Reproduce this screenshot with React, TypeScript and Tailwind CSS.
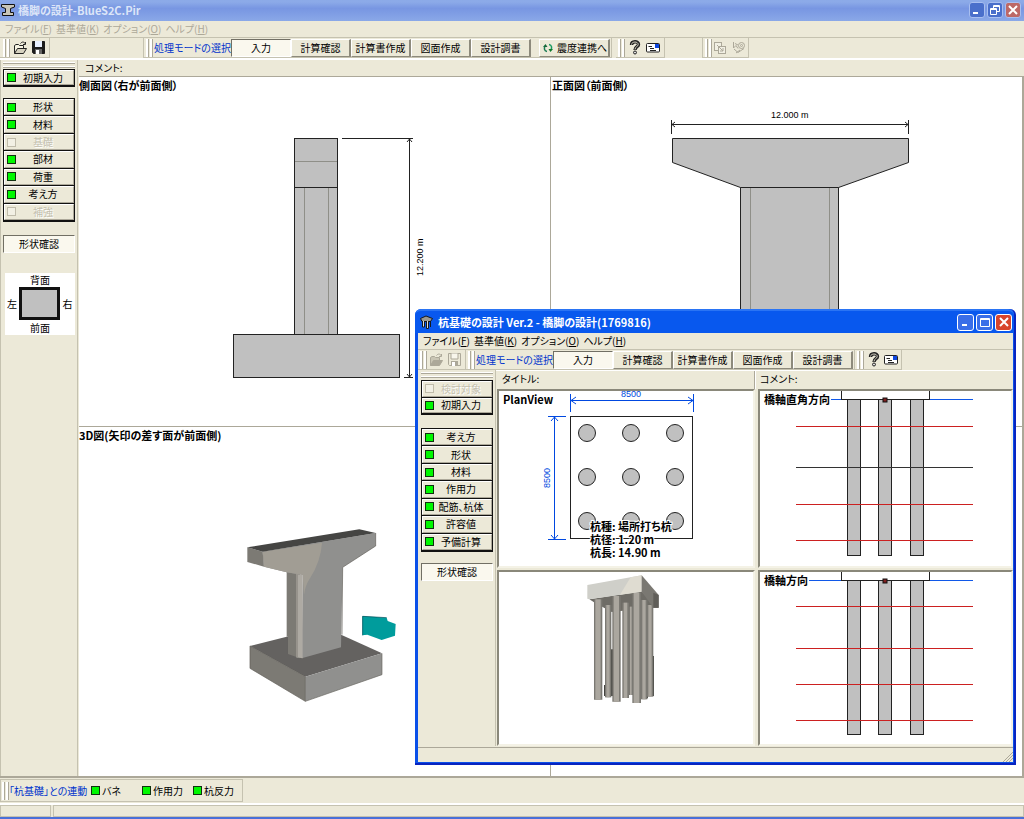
import type { ReactNode } from 'react'
import { clsx } from 'clsx'

interface Step {
  label: string;
  disabled?: boolean;
}

const MENUS = [
  { label: 'ファイル', accel: 'F' },
  { label: '基準値', accel: 'K' },
  { label: 'オプション', accel: 'O' },
  { label: 'ヘルプ', accel: 'H' }
]

const MODES = ['入力', '計算確認', '計算書作成', '図面作成', '設計調書']

const PIER_STEPS: Step[] = [
  { label: '形状' },
  { label: '材料' },
  { label: '基礎', disabled: true },
  { label: '部材' },
  { label: '荷重' },
  { label: '考え方' },
  { label: '補強', disabled: true }
]

const PILE_START: Step[] = [
  { label: '検討対象', disabled: true },
  { label: '初期入力' }
]

const PILE_STEPS: Step[] = [
  { label: '考え方' },
  { label: '形状' },
  { label: '材料' },
  { label: '作用力' },
  { label: '配筋、杭体' },
  { label: '許容値' },
  { label: '予備計算' }
]

function Lamp({ off }: { off?: boolean }) {
  return (
    <span
      className={clsx(
        'block size-[9px] shrink-0 border',
        off ? 'border-[#c0bcab] bg-[#f2f0e4]' : 'border-[#103010] bg-[#00f800]'
      )}
    />
  )
}

function StepButton({ label, disabled }: Step) {
  return (
    <button
      disabled={disabled}
      className="flex min-h-0 flex-1 items-center border-t border-[#111] first:border-t-0"
    >
      <span className="flex h-full w-full items-center border border-t-white border-l-white border-r-[#aca899] border-b-[#aca899] pr-[3px] pl-[2px]">
        <Lamp off={disabled} />
        <span className={clsx('flex-1 text-center leading-3', disabled && 'text-[#c3bfae] [text-shadow:1px_1px_#fff]')}>
          {label}
        </span>
      </span>
    </button>
  )
}

function StepGroup({ steps, className }: { steps: Step[]; className: string }) {
  return (
    <div className={clsx('flex shrink-0 flex-col border border-b-2 border-[#111]', className)}>
      {steps.map((step) => (
        <StepButton key={step.label} {...step} />
      ))}
    </div>
  )
}

function SideGrip() {
  return (
    <div className="mb-[2px] flex h-[6px] shrink-0 flex-col justify-between">
      <span className="h-[2px] border-b border-[#aca899] bg-white" />
      <span className="h-[2px] border-b border-[#aca899] bg-white" />
    </div>
  )
}

function ShapeCheck({ className }: { className: string }) {
  return (
    <button className={clsx('h-[18px] shrink-0 border border-t-[#716f64] border-l-[#716f64] border-r-white border-b-white bg-[#faf8ee] leading-3', className)}>
      形状確認
    </button>
  )
}

function Grip() {
  return (
    <span className="flex h-[18px] shrink-0 gap-px">
      <span className="w-[3px] border-r border-[#aca899] bg-white" />
      <span className="w-[3px] border-r border-[#aca899] bg-white" />
    </span>
  )
}

function ToolGroup({ className, children }: { className?: string; children: ReactNode }) {
  return (
    <div className={clsx('flex h-5 shrink-0 items-center border-r border-b border-[#c5c2b0]', className)}>
      <Grip />
      {children}
    </div>
  )
}

function ModeButtons() {
  return (
    <>
      <span className="ml-px whitespace-nowrap text-[#0033cc]">処理モードの選択</span>
      {MODES.map((mode, i) => (
        <button
          key={mode}
          className={clsx(
            'h-[18px] w-[60px] shrink-0 border whitespace-nowrap leading-3',
            i === 0
              ? 'border-t-[#716f64] border-l-[#716f64] border-r-white border-b-white bg-[#faf8ee]'
              : 'border-r-2 border-t-white border-l-white border-r-[#8d8a7c] border-b-[#8d8a7c]'
          )}
        >
          {mode}
        </button>
      ))}
    </>
  )
}

function OpenIcon({ disabled }: { disabled?: boolean }) {
  const line = disabled ? '#aca899' : '#222'
  return (
    <svg width="15" height="14" viewBox="0 0 15 14" fill="none" stroke={line}>
      <path d="M1.500 12.500V4.500L3 3.500H5.500L6.500 4.500H10.500V7" fill={disabled ? '#c9c5b4' : '#f6f4e4'} />
      <path d="M1.500 12.500L4.500 7.500H13.500L10.500 12.500Z" fill={disabled ? '#aca899' : '#d6d2c0'} />
      <path d="M7.500 2.500C9 .5 11 .5 12.500 3M12.500 1V3.500H10" />
    </svg>
  )
}

function SaveIcon({ disabled }: { disabled?: boolean }) {
  const line = disabled ? '#aca899' : '#1c1c1c'
  return (
    <svg width="13" height="13" viewBox="0 0 13 13">
      <path d="M.5 .5H12.500V12.500H1.500L.5 11.500Z" fill={disabled ? '#ece9d8' : line} stroke={line} />
      <path d="M3 0H10V6H3Z" fill={disabled ? '#f8f6ec' : '#e8f0ff'} stroke={disabled ? line : 'none'} />
      <path d="M3 8H10V13H3Z" fill={disabled ? line : '#666'} />
      <path d="M4 9H7V13H4Z" fill="#fff" />
    </svg>
  )
}

function HelpIcon() {
  return (
    <svg width="12" height="15" viewBox="0 0 12 15" fill="none">
      <path d="M2.500 5C2.500 .8 9.500 .8 9.500 4.500C9.500 7 6 6.500 6 10" stroke="#222" strokeWidth="3.400" />
      <path d="M2.500 4.500C2.800 1.200 9.200 1.200 9.200 4.500C9.200 6.800 6 6.500 6 9.500" stroke="#d8d4c4" />
      <circle cx="6" cy="12.500" r="1.500" fill="#ddd" stroke="#222" />
    </svg>
  )
}

function MailIcon() {
  return (
    <svg width="14" height="10" viewBox="0 0 14 10">
      <rect x=".5" y=".5" width="13" height="8.500" rx="1" fill="#fff" stroke="#222" />
      <rect x="9" y="1" width="4" height="4" fill="#1048e0" />
      <path d="M2.500 3.500H6M4 5.500H8M4 7.500H10" stroke="#222" />
    </svg>
  )
}

function LinkIcon() {
  return (
    <svg width="10" height="10" viewBox="0 0 10 10" fill="none" strokeWidth="1.500">
      <path d="M4 8.500C1 8 1 5 2 3" stroke="#1a7a52" />
      <path d="M0 4L2.500 1L4.500 4Z" fill="#16693a" />
      <path d="M6 1.500C9 2 9 5 8 7" stroke="#1a9a62" />
      <path d="M5.500 6L7.500 9L10 6Z" fill="#0c7a2c" />
    </svg>
  )
}

function CopyIcon() {
  return (
    <svg width="14" height="14" viewBox="0 0 14 14" fill="#f2f0e4" stroke="#aca899">
      <rect x="1.500" y="1.500" width="7" height="8" />
      <rect x="5.500" y="5.500" width="7" height="7" />
      <path d="M4 4L10 10M10 7V10H7" fill="none" />
    </svg>
  )
}

function SignalIcon() {
  return (
    <svg width="14" height="13" viewBox="0 0 14 13" fill="none" stroke="#aca899">
      <path d="M1.500 1V7L4 4.500L6 7.500M3 2.500L6 4" />
      <circle cx="9.500" cy="4.500" r="3" />
      <circle cx="9.500" cy="4.500" r="1" />
      <path d="M2 8L6 11.500L12 7.500M4 12L8 9" />
    </svg>
  )
}

function WindowButton({ kind, active }: { kind: 'minimize' | 'maximize' | 'restore' | 'close'; active?: boolean }) {
  return (
    <button
      aria-label={kind}
      className={clsx(
        'flex items-center justify-center rounded-[3px] border',
        active ? 'size-[17px] border-white' : 'size-4 border-[#a9bff0]',
        kind === 'close'
          ? active ? 'bg-[#d8452c]' : 'bg-[#bd6866]'
          : active ? 'bg-[#3a6ee8]' : 'bg-[#4a6fcb]'
      )}
    >
      <svg width="12" height="12" viewBox="0 0 12 12" fill="none" stroke="#fff">
        {kind === 'minimize' && <path d="M2 9H7" strokeWidth="2" />}
        {kind === 'maximize' && <path d="M1.500 2.500H10.500V10.500H1.500ZM1.500 3.500H10.500" />}
        {kind === 'restore' && <path d="M4.500 4V1.500H10.500V7.500H8M4.500 2.500H10.500M1.500 4.500H7.500V10.500H1.500ZM1.500 5.500H7.500" />}
        {kind === 'close' && <path d="M2 2L10 10M10 2L2 10" strokeWidth="2" />}
      </svg>
    </button>
  )
}

function MenuBar({ disabled }: { disabled?: boolean }) {
  return (
    <nav className={clsx('flex h-4 shrink-0 items-center gap-1 pl-[5px]', disabled && 'text-[#aca899]')}>
      {MENUS.map((menu) => (
        <button key={menu.accel} className="leading-3 whitespace-nowrap">
          {menu.label}(<u>{menu.accel}</u>)
        </button>
      ))}
    </nav>
  )
}

// Every view uses the same sheet coordinates; x and y pick the corner it starts from.
function Drawing({ x, y, title, children }: { x: number; y: number; title: string; children: ReactNode }) {
  return (
    <svg role="img" aria-label={title} className="absolute inset-0 h-full w-full">
      <g transform={`translate(${-x} ${-y})`}>{children}</g>
    </svg>
  )
}

function SideView() {
  return (
    <Drawing x={79} y={77} title="側面図">
      <g fill="#c0c0c0" stroke="#222">
        <rect x="294.500" y="138.500" width="43" height="49" />
        <rect x="294.500" y="187.500" width="43" height="147" />
        <rect x="233.500" y="334.500" width="166" height="43" />
      </g>
      <path d="M295 161.500H337M304.500 188V334M328.500 188V334" stroke="#8f8f88" />
      <path d="M342 138.500H413M409.500 138V378M404 377.500H413" stroke="#222" />
      <path d="M407 142L409.500 139L412 142M407 374L409.500 377L412 374" stroke="#222" fill="none" />
      <text x="423" y="276" transform="rotate(-90 423 276)" className="font-['Liberation_Sans',sans-serif] text-[9px]">12.200 m</text>
    </Drawing>
  )
}

function FrontView() {
  return (
    <Drawing x={551} y={77} title="正面図">
      <g fill="#c0c0c0" stroke="#222">
        <rect x="740.500" y="187.500" width="98" height="200" />
        <path d="M672.500 138.500H908.500V162.500L838.500 187.500H740.500L672.500 162.500Z" />
      </g>
      <path d="M750.500 188V387M829.500 188V387" stroke="#8f8f88" />
      <path d="M672 124.500H908M671.500 120V134M908.500 120V134" stroke="#222" />
      <path d="M675 122L672 124.500L675 127M905 122L908 124.500L905 127" stroke="#222" fill="none" />
      <text x="771" y="118" className="font-['Liberation_Sans',sans-serif] text-[9px]">12.000 m</text>
    </Drawing>
  )
}

function PierModel() {
  return (
    <Drawing x={79} y={427} title="3D図">
      <g transform="translate(230 510) scale(.33333)" strokeWidth="2">
        <path d="M60 408L170 380L335 375L456 430L226 500Z" fill="#646260" />
        <path d="M60 408L226 500V574L60 475Z" fill="#7c7a74" />
        <path d="M226 500L456 430V494L226 574Z" fill="#90908e" />
        <path d="M60 408L226 500V574L60 475Z" fill="none" stroke="#5f5c56" />
        <path d="M226 574L456 494V430" fill="none" stroke="#6a6862" />
        <path d="M170 185H210V445L174 432V380H170Z" fill="#7c7a74" />
        <path d="M98 125L437 69V108L338 172L333 412L215 445L218 195L170 187L102 170Z" fill="#90908e" />
        <path d="M98 125L276 98Q272 155 240 205Q226 225 222 255L218 195L170 187L102 170Z" fill="#a19d94" />
        <path d="M198 193L218 195V445L198 442Z" fill="#aeaaa3" />
        <path d="M198 193H204V443L198 441Z" fill="#97938c" />
        <path d="M52 112L98 125L102 170L52 156Z" fill="#7c7a74" />
        <path d="M52 112L388 58L437 69L98 125Z" fill="#454543" />
        <path d="M338 172L336 374M437 69V108L338 172" fill="none" stroke="#5f5c56" />
        <path d="M397 318L470 323L473 333L497 342L495 377L455 390L412 374L397 376Z" fill="#009c9c" />
        <path d="M398 376V319L470 323" fill="none" stroke="#054c58" />
      </g>
    </Drawing>
  )
}

function PlanView() {
  const rows = [433, 477, 521]
  const cols = [587, 631, 675]

  return (
    <Drawing x={499} y={391} title="PlanView">
      <rect x="570.500" y="416.500" width="122" height="122" fill="#fff" stroke="#222" />
      {rows.map((cy) => cols.map((cx) => (
        <circle key={`${cx}-${cy}`} cx={cx} cy={cy} r="8.500" fill="#c0c0c0" stroke="#222" />
      )))}
      <g stroke="#0048e0" fill="none">
        <path d="M570.500 394V412M693.500 394V412M571 400.500H693" />
        <path d="M576 397L571 400.500L576 404M688 397L693 400.500L688 404" />
        <path d="M548 416.500H566M548 539.500H566M554.500 417V539" />
        <path d="M551 421L554.500 417L558 421M551 535L554.500 539L558 535" />
      </g>
      <g fill="#0048e0" className="font-['Liberation_Sans',sans-serif] text-[9px]">
        <text x="621" y="397">8500</text>
        <text x="550" y="488" transform="rotate(-90 550 488)">8500</text>
      </g>
      <g className="text-[11px] font-bold" stroke="#fff" strokeWidth="2" paintOrder="stroke">
        <text x="590" y="531">杭種: 場所打ち杭</text>
        <text x="590" y="544">杭径: 1.20 m</text>
        <text x="590" y="557">杭長: 14.90 m</text>
      </g>
    </Drawing>
  )
}

function PileModel() {
  const piles = [
    { x: 416, top: 140, bottom: 405, w: 14 },
    { x: 345, top: 135, bottom: 412, w: 19 },
    { x: 397, top: 128, bottom: 414, w: 20 },
    { x: 471, top: 135, bottom: 410, w: 19 },
    { x: 453, top: 120, bottom: 418, w: 19 },
    { x: 312, top: 118, bottom: 419, w: 25 },
    { x: 367, top: 108, bottom: 425, w: 25 },
    { x: 427, top: 98, bottom: 429, w: 26 }
  ]

  return (
    <Drawing x={499} y={572} title="杭の3D図">
      <g transform="translate(490 560) scale(.33333)">
        <path d="M298 118L455 94L506 143H480L365 156L312 127Z" fill="#6e6c66" />
        <path d="M363 268H369V408H363ZM342 375H347V408H342ZM488 288H492V408H488ZM471 350H474V415H471Z" fill="#44433f" />
        {piles.map(({ x, top, bottom, w }) => (
          <g key={x}>
            <path d={`M${x} ${top}H${x + w}V${bottom}H${x}Z`} fill="#7b7973" />
            <path d={`M${x + 4} ${top}H${x + w - 5}V${bottom}H${x + 4}Z`} fill="#aba79f" />
          </g>
        ))}
        <path d="M292 75L455 46V95L298 118L292 116Z" fill="#cfcfc9" />
        <path d="M422 52L455 46V95L390 104Z" fill="#dfdcd1" />
        <path d="M455 46L506 105V143H490L455 95Z" fill="#7a7872" />
        <path d="M490 98L506 105V143H490Z" fill="#605e59" />
      </g>
    </Drawing>
  )
}

interface SectionProps {
  title: string;
  y: number;
  ground: number;
  start: number;
  bottom: number;
  layers: number[];
  water?: number;
}

function PileSection({ title, y, ground, start, bottom, layers, water }: SectionProps) {
  return (
    <Drawing x={760} y={y} title={title}>
      <path d={`M${start} ${ground + 0.5}H973`} stroke="#1058e8" />
      <rect x="841.500" y={ground - 30} width="88" height="30.500" fill="#fff" stroke="#222" />
      {[847, 878, 910].map((x) => (
        <rect key={x} x={x + 0.5} y={ground + 0.5} width="13" height={bottom - ground} fill="#c0c0c0" stroke="#222" />
      ))}
      {layers.map((layer) => (
        <path key={layer} d={`M796 ${layer + 0.5}H973`} stroke="#cc2020" />
      ))}
      {water && <path d={`M796 ${water + 0.5}H973`} stroke="#333" />}
      <rect x="883" y={ground - 1} width="4" height="4" fill="#802020" stroke="#111" />
    </Drawing>
  )
}

function Pane({ title, className, children }: { title?: string; className?: string; children: ReactNode }) {
  return (
    <section className={clsx('relative min-h-0 min-w-0 overflow-hidden bg-white', className)}>
      {children}
      {title && <h2 className="relative w-fit text-[11px] leading-4 font-bold whitespace-nowrap">{title}</h2>}
    </section>
  )
}

function PileWindow() {
  const sunken = 'border-2 border-t-[#8a887a] border-l-[#8a887a] border-r-[#f4f2e6] border-b-[#f4f2e6]'

  return (
    <div
      role="dialog"
      aria-label="杭基礎の設計"
      className="absolute top-[309px] left-[415px] flex h-[456px] w-[601px] flex-col rounded-t-[6px] border-r-2 border-b-2 border-[#0824c0] bg-[#0a50e8] pr-px pb-px pl-[3px]"
    >
      <header className="-mr-px -ml-[3px] flex h-6 shrink-0 items-center gap-px rounded-t-[6px] border-t-2 border-[#2a74f4] bg-[#0858ee] pr-[2px] pl-[5px] text-[11px] text-white">
        <svg width="13" height="15" viewBox="0 0 13 15" fill="#555" stroke="#15181c">
          <path d="M.5 3.500L6 1L12.500 3.500L10.500 6.500H2Z" fill="#9a9890" />
          <path d="M2.500 6V12H4.500V6M6.500 6V13.500H8.500V6M10.500 6V12" fill="#ddd" />
        </svg>
        <h1 className="flex-1 pl-1 font-bold whitespace-nowrap">杭基礎の設計 Ver.2 - 橋脚の設計(1769816)</h1>
        <div className="flex gap-[2px]">
          <WindowButton kind="minimize" active />
          <WindowButton kind="maximize" active />
          <WindowButton kind="close" active />
        </div>
      </header>

      <div className="flex min-h-0 flex-1 flex-col bg-[#ece9d8]">
        <MenuBar />
        <div className="flex h-[21px] shrink-0 items-start border-t border-[#c5c2b0]">
          <ToolGroup className="w-12 pl-[2px]">
            <button aria-label="開く" disabled className="ml-[2px]"><OpenIcon disabled /></button>
            <button aria-label="保存" disabled className="ml-[4px]"><SaveIcon disabled /></button>
          </ToolGroup>
          <ToolGroup className="pr-px pl-[2px]">
            <ModeButtons />
          </ToolGroup>
          <ToolGroup className="pr-[3px] pl-[2px]">
            <button aria-label="ヘルプ" className="ml-1"><HelpIcon /></button>
            <button aria-label="問い合わせ" className="ml-1"><MailIcon /></button>
          </ToolGroup>
        </div>

        <div className="flex min-h-0 flex-1">
          <aside className="flex w-[78px] shrink-0 flex-col border-r border-[#c5c2b0] py-[2px] pr-[2px] pl-[3px]">
            <SideGrip />
            <StepGroup steps={PILE_START} className="h-[35px]" />
            <StepGroup steps={PILE_STEPS} className="mt-[13px] h-[124px]" />
            <ShapeCheck className="mt-[11px]" />
          </aside>

          <div className="flex min-w-0 flex-1 flex-col">
            <div className="grid h-[19px] shrink-0 grid-cols-[259px_1fr] border-t border-white">
              <p className="border-r border-[#aca899] pl-[6px] leading-4">タイトル:</p>
              <p className="border-l border-white pl-1 leading-4">コメント:</p>
            </div>
            <div className="grid min-h-0 flex-1 grid-cols-[258px_1fr] grid-rows-[179px_1fr] gap-x-[3px] gap-y-[2px] pl-px">
              <Pane className={clsx(sunken, 'pl-1')} title="PlanView"><PlanView /></Pane>
              <Pane className={clsx(sunken, 'pl-1')} title="橋軸直角方向">
                <PileSection title="橋軸直角方向" y={391} ground={399} start={831} bottom={555} layers={[426, 504, 540]} water={467} />
              </Pane>
              <Pane className={sunken}><PileModel /></Pane>
              <Pane className={clsx(sunken, 'pl-1')} title="橋軸方向">
                <PileSection title="橋軸方向" y={572} ground={580} start={809} bottom={734} layers={[606, 648, 684, 720]} />
              </Pane>
            </div>
          </div>
        </div>

        <footer className="mt-px flex h-[15px] shrink-0 items-end justify-end border-t border-[#aca899]">
          <svg width="10" height="10" viewBox="0 0 10 10" stroke="#aca899">
            <path d="M0 10L10 0M3 10L10 3M6 10L10 6" />
          </svg>
        </footer>
      </div>
    </div>
  )
}

export default function App() {
  return (
    <div className="relative flex h-screen min-w-[1020px] flex-col overflow-hidden bg-[#ece9d8] font-['Noto_Sans_CJK_JP',sans-serif] text-[10px] leading-3 text-black [font-feature-settings:'palt']">
      <header className="flex h-[21px] shrink-0 items-center bg-linear-to-b from-[#8caae8] from-10% via-[#7896e2] via-40% to-[#8aa8e8] pr-[3px] pb-[2px] pl-[1px] text-[11px] text-[#dce5f8]">
        <svg width="14" height="14" viewBox="0 0 14 14" fill="#c9c6b8" stroke="#111">
          <path d="M.5 1.500H13.500V4L9.500 5.500V9.500H12.500V12.500H1.500V9.500H4.500V5.500L.5 4Z" />
        </svg>
        <h1 className="flex-1 pl-[3px] font-bold whitespace-nowrap">橋脚の設計-BlueS2C.Pir</h1>
        <div className="flex gap-[2px]">
          <WindowButton kind="minimize" />
          <WindowButton kind="restore" />
          <WindowButton kind="close" />
        </div>
      </header>

      <MenuBar disabled />

      <div className="flex h-[23px] shrink-0 items-start border-t border-b-2 border-t-[#c5c2b0] border-b-white">
        <ToolGroup className="w-[50px] pl-[3px]">
          <button aria-label="開く" className="ml-[3px]"><OpenIcon /></button>
          <button aria-label="保存" className="ml-1"><SaveIcon /></button>
        </ToolGroup>
        <ToolGroup className="ml-[93px] border-l pr-px pl-[2px]">
          <ModeButtons />
          <button className="ml-2 flex h-[18px] w-[71px] items-center gap-1 border border-r-2 border-t-white border-l-white border-r-[#8d8a7c] border-b-[#8d8a7c] pl-[3px] whitespace-nowrap">
            <LinkIcon />
            震度連携へ
          </button>
        </ToolGroup>
        <ToolGroup className="ml-1 w-[49px] pl-[2px]">
          <button aria-label="ヘルプ" className="ml-1"><HelpIcon /></button>
          <button aria-label="問い合わせ" className="ml-[5px]"><MailIcon /></button>
        </ToolGroup>
        <ToolGroup className="ml-[37px] w-[47px] border-l pl-[2px]">
          <button aria-label="コピー" disabled className="ml-px"><CopyIcon /></button>
          <button aria-label="通信" disabled className="ml-[5px]"><SignalIcon /></button>
        </ToolGroup>
      </div>

      <main className="flex min-h-0 flex-1">
        <aside className="flex w-[78px] shrink-0 flex-col border-x border-[#c5c2b0] pt-[2px] pr-[2px] pb-1 pl-[2px]">
          <SideGrip />
          <StepGroup steps={[{ label: '初期入力' }]} className="-mt-px h-[18px]" />
          <StepGroup steps={PIER_STEPS} className="mt-[11px] h-[124px]" />
          <ShapeCheck className="mt-[13px]" />
          <div className="mt-5 ml-[2px] grid shrink-0 grid-cols-[14px_41px_1fr] items-center bg-white text-center">
            <span className="col-span-3 h-[14px] leading-[14px]">背面</span>
            <span>左</span>
            <span className="h-[33px] border-[3px] border-[#111] bg-[#c0c0c0]" />
            <span>右</span>
            <span className="col-span-3 h-[15px] leading-[15px]">前面</span>
          </div>
        </aside>

        <div className="flex min-w-0 flex-1 flex-col pl-px">
          <p className="h-4 shrink-0 pl-[6px] leading-4">コメント:</p>
          <div className="grid min-h-0 flex-1 grid-cols-2 grid-rows-2 gap-px border-t border-r-2 border-[#aca899] bg-[#aca899]">
            <Pane title="側面図（右が前面側）"><SideView /></Pane>
            <Pane title="正面図（前面側）" className="pl-px"><FrontView /></Pane>
            <Pane title="3D図(矢印の差す面が前面側)"><PierModel /></Pane>
            <Pane><span /></Pane>
          </div>
        </div>
      </main>

      <div className="flex h-[27px] shrink-0 items-center border-t-2 border-[#aca899]">
        <div className="flex h-[23px] w-[243px] items-center border border-[#c5c2b0] pl-px">
          <Grip />
          <span className="w-[82px] whitespace-nowrap text-[#0033cc]">「杭基礎」との連動</span>
          <div className="flex w-[51px] items-center gap-[2px]"><Lamp />バネ</div>
          <div className="flex w-[51px] items-center gap-[2px]"><Lamp />作用力</div>
          <div className="flex items-center gap-[2px]"><Lamp />杭反力</div>
        </div>
      </div>

      <footer className="flex h-4 shrink-0 gap-[2px] border-t-2 border-b-2 border-t-white border-b-[#4a70d8]">
        <span className="w-[51px] border border-[#c5c2b0]" />
        <span className="flex-1 border border-[#c5c2b0]" />
      </footer>

      <PileWindow />
    </div>
  )
}
